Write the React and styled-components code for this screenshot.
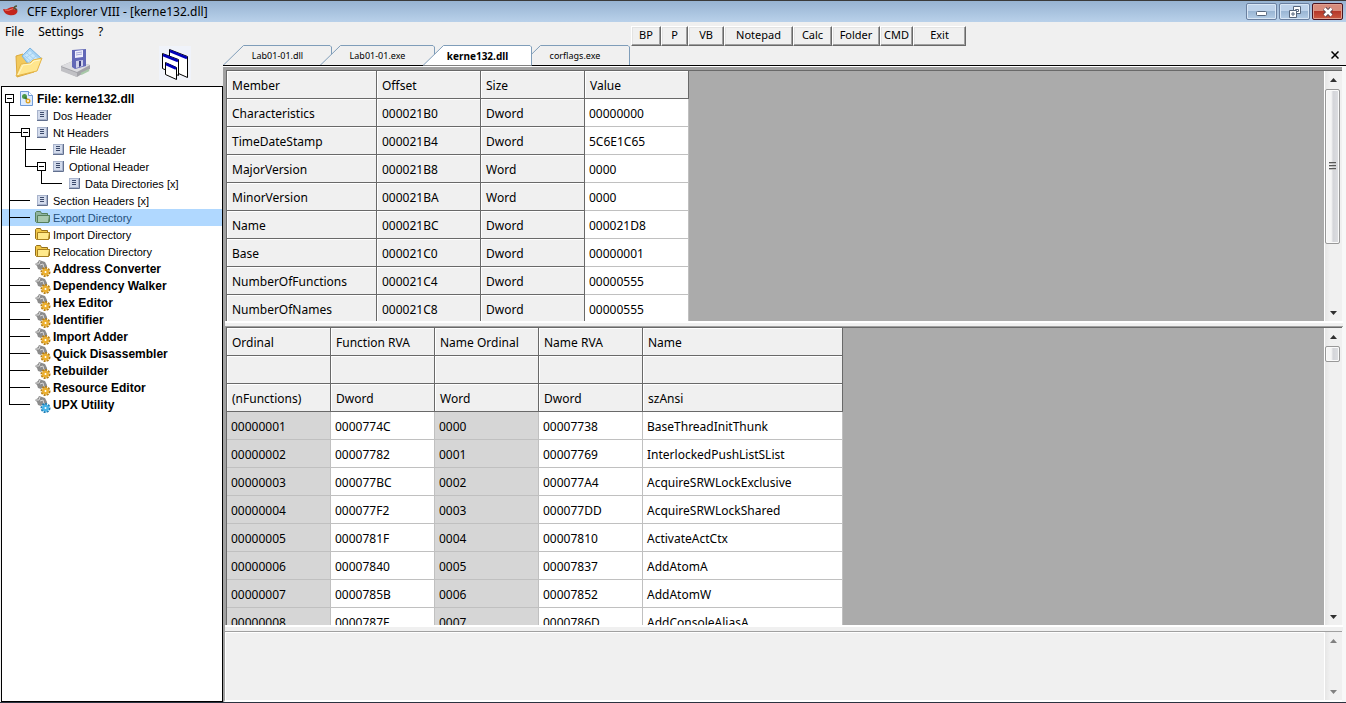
import { useState } from "react";
import styled, { createGlobalStyle } from "styled-components";

const UI_FONT = `"Noto Sans", "Open Sans", sans-serif`;
const TREE_FONT = `"Liberation Sans", Arial, sans-serif`;

const FACE = "#f0f0f0";
const SHADOW = "#a0a0a0";
const DARK = "#696969";
const WORKSPACE = "#ababab";

const GlobalStyle = createGlobalStyle`
    * {
        box-sizing: border-box;
    }

    body {
        margin: 0;
        background: ${FACE};
        color: #000000;
        font-family: ${UI_FONT};
        font-size: 12px;
        overflow: hidden;
    }

    button {
        margin: 0;
        padding: 0;
        border: 0;
        background: none;
        color: inherit;
        font: inherit;
    }

    svg {
        display: block;
        flex: none;
    }
`;

const Window = styled.div`
    display: flex;
    flex-direction: column;
    height: 100vh;
    border-bottom: 1px solid #2b3340;
    background: ${FACE};
`;

const TitleBar = styled.header`
    display: flex;
    align-items: center;
    height: 22px;
    padding: 0 3px;
    border-top: 1px solid #3a3a3a;
    background: linear-gradient(#97b3d2, #b9d1ea);

    h1 {
        flex: 1;
        margin: 0 0 0 8px;
        font-size: 12px;
        font-weight: normal;
        line-height: 20px;
    }
`;

const Caption = styled.button`
    display: flex;
    align-items: center;
    justify-content: center;
    width: 31px;
    height: 17px;
    margin-left: 2px;
    border: 1px solid ${({ $close }) => ($close ? "#4a1420" : "#6a80a0")};
    border-radius: 2px;
    box-shadow: inset 0 0 0 1px ${({ $close }) => ($close ? "#e0a090" : "#d8e6f5")};
    background: ${({ $close }) =>
        $close
            ? "linear-gradient(#d88c7c 0 45%, #b5382a 50%, #cc5a42)"
            : "linear-gradient(#bdd2ea 0 45%, #9ab6d4 50%, #b4cde6)"};
`;

const Body = styled.div`
    display: grid;
    grid-template-columns: 223px minmax(0, 1fr);
    flex: 1;
    min-height: 0;
`;

const Sidebar = styled.aside`
    display: flex;
    flex-direction: column;
    min-height: 0;
    padding-left: 1px;
`;

const MenuBar = styled.nav`
    display: flex;
    gap: 14px;
    height: 20px;
    padding-left: 4px;

    button {
        line-height: 20px;
    }
`;

const ToolBar = styled.div`
    display: flex;
    gap: 16px;
    height: 44px;
    padding: 4px 12px;

    button {
        width: 32px;
        height: 34px;
    }

    button:last-child {
        margin-left: 50px;
        background: #f0f3fa;
    }
`;

const Tree = styled.ul`
    flex: 1;
    min-height: 0;
    margin: 0;
    padding: 3px 0 0;
    border: 1px solid #000000;
    background: #ffffff;
    list-style: none;
    overflow: hidden;
    font-family: ${TREE_FONT};
`;

const TreeRow = styled.button`
    display: flex;
    align-items: center;
    width: 100%;
    height: 17px;
    background: ${({ $selected }) => ($selected ? "#b0d8ff" : "transparent")};
    color: ${({ $selected }) => ($selected ? "#24507c" : "#000000")};
    font-size: ${({ $bold }) => ($bold ? "12px" : "11px")};
    font-weight: ${({ $bold }) => ($bold ? "bold" : "normal")};
    line-height: 15px;
    white-space: nowrap;

    span {
        margin-left: 2px;
        padding-top: 2px;
    }
`;

const Main = styled.main`
    display: flex;
    flex-direction: column;
    min-width: 0;
    min-height: 0;
`;

const LaunchBar = styled.div`
    display: flex;
    height: 24px;
    padding: 4px 0 0 408px;
`;

const LaunchButton = styled.button`
    width: ${({ $width }) => $width}px;
    height: 20px;
    padding-bottom: 2px;
    border: 1px solid;
    border-color: #ffffff ${DARK} ${DARK} #ffffff;
    box-shadow: inset -1px -1px 0 ${SHADOW}, inset 1px 1px 0 #e3e3e3;
    background: ${FACE};
    font-size: 11px;
    line-height: 16px;
`;

const TabBar = styled.div`
    display: flex;
    height: 21px;
    margin-top: -1px;
    border-bottom: 1px solid #000000;
`;

const TabButton = styled.button`
    position: relative;
    z-index: ${({ $active }) => ($active ? 2 : "auto")};
    width: ${({ $width }) => $width}px;
    height: 21px;
    font-size: ${({ $active }) => ($active ? "10px" : "9px")};
    font-weight: ${({ $active }) => ($active ? "bold" : "normal")};

    & + & {
        margin-left: -12px;
    }

    svg {
        position: absolute;
        inset: 0;
    }

    span {
        position: relative;
    }
`;

const CloseDocument = styled.button`
    display: flex;
    align-items: center;
    margin: 0 7px 0 auto;
`;

const Workspace = styled.div`
    display: grid;
    grid-template-rows: 251fr 6px 298fr 6px 71fr;
    flex: 1;
    min-height: 0;
    padding: 3px 0 0 3px;
    border-top: 1px solid #ffffff;
    border-right: 4px solid #f8f8f8;
    background: ${SHADOW};
`;

const Pane = styled.section`
    display: flex;
    min-width: 0;
    min-height: 0;
    border-top: 1px solid ${DARK};
    border-left: 1px solid ${DARK};
    background: ${WORKSPACE};
    overflow: hidden;
`;

const PaneContent = styled.div`
    flex: 1;
    min-width: 0;
    overflow: hidden;
`;

const LogPane = styled(Pane)`
    margin-left: -2px;
    border-color: ${SHADOW};
    border-bottom: 2px solid #ffffff;
    background: ${FACE};
    box-shadow: inset 1px 1px 0 #ffffff;
`;

const LogText = styled.textarea`
    flex: 1;
    min-width: 0;
    border: 0;
    outline: 0;
    background: transparent;
    resize: none;
    font: inherit;
`;

const Splitter = styled.div`
    margin: 0 -1px;
    border-top: 2px solid #ffffff;
    border-bottom: 1px solid ${({ $soft }) => ($soft ? FACE : SHADOW)};
    background: ${FACE};
`;

const Grid = styled.table`
    table-layout: fixed;
    width: ${({ $width }) => $width}px;
    border-collapse: separate;
    border-spacing: 0;
`;

const HeadCell = styled.th`
    height: 28px;
    padding: 3px 0 0 5px;
    border-right: 1px solid ${DARK};
    border-bottom: 1px solid ${DARK};
    box-shadow: inset 1px 1px 0 #ffffff;
    background: ${FACE};
    font-weight: normal;
    line-height: 20px;
    text-align: left;
    white-space: nowrap;
`;

const DataCell = styled.td`
    height: 28px;
    padding: 3px 0 0 4px;
    border-right: 1px solid #c0c0c0;
    border-bottom: 1px solid #c0c0c0;
    background: ${({ $shaded }) => ($shaded ? "#d6d6d6" : "#ffffff")};
    line-height: 20px;
    white-space: nowrap;
`;

const ScrollColumn = styled.div`
    display: flex;
    flex-direction: column;
    width: 18px;
    border: solid #ffffff;
    border-width: 0 0 0 1px;
    background: linear-gradient(90deg, #e6e6e6, #f0f0f0 30%, #f0f0f0);

    button {
        display: flex;
        align-items: center;
        justify-content: center;
        height: 17px;
    }
`;

const Track = styled.div`
    flex: 1;
    padding: 1px 2px 0 0;
`;

const Thumb = styled.div`
    display: flex;
    align-items: center;
    justify-content: center;
    height: ${({ $height }) => $height};
    border: 1px solid #989898;
    border-radius: 2px;
    box-shadow: inset 0 0 0 1px #fafafa;
    background: linear-gradient(90deg, #f5f5f5 0 40%, #d4d5d9 55%, #dedfe2);
`;

const ChiliIcon = () => (
    <svg width="16" height="14" viewBox="0 0 16 14">
        <path d="M0 4q3 1 6-1q4-2 7 0q3 3 0 6q-3 2-7 1q-5-1-6-6z" fill="#c3251d" />
        <path d="M2 5q4 1 7-1q2-1 3 0" fill="none" stroke="#f08070" />
        <path d="M11 4q0-3 3-3M11 3l3 2" fill="none" stroke="#4c5838" strokeWidth="1.5" />
    </svg>
);

const OpenIcon = () => (
    <svg width="32" height="34" viewBox="0 0 32 34">
        <path d="M3 10l7-2 3 3 9 6-1 9-17 5z" fill="#f2c95c" stroke="#dca93c" />
        <path d="M17 2l12 11-10 10-10-13z" fill="#a8d4f4" stroke="#79b4e2" />
        <path d="M17 5l8 8-7 6-7-9z" fill="#c8e7fb" />
        <path d="M14 7l10 9M12 10l9 8M20 7l-7 5M23 10l-7 6" stroke="#a4d0f0" />
        <path d="M3 30l5-12 9-1 3-3 9-2-5 13z" fill="#ffe68e" stroke="#e5b548" />
        <path d="M5 29l5-10 8-1 3-3 6-1" fill="none" stroke="#fff7c8" />
    </svg>
);

const SaveIcon = () => (
    <svg width="32" height="34" viewBox="0 0 32 34">
        <path d="M0 20l12-5 17 4v4l-13 8-16-7z" fill="#a3a3a8" />
        <path d="M0 20l12-5 17 4-13 7z" fill="#dddde0" />
        <path d="M0 21l16 6v4l-16-6z" fill="#c1c1c5" />
        <path d="M20 28l8-4" stroke="#a8c8a8" strokeWidth="2" />
        <path d="M11 4l14-1v17l-11 3-3-2z" fill="#6268b7" />
        <path d="M14 5l8-1v7l-8 1z" fill="#f0f0fc" />
        <path d="M15 7l6-1M15 9l6-1" stroke="#a4a8d8" />
        <path d="M15 15l7-1v6l-7 2z" fill="#d0d2ea" />
        <path d="M18 15l2 0v5l-2 1z" fill="#383c82" />
    </svg>
);

const CascadeIcon = () => (
    <svg width="32" height="34" viewBox="0 0 32 34">
        <g fill="#ffffff" stroke="#000000">
            <path d="M10.500 3.500l18 7v21l-18-8z" />
            <path d="M3.500 7.500l16 6v16l-16-7z" />
            <path d="M6.500 16.500l11 5v12l-11-5z" />
        </g>
        <g stroke="#0000b8" strokeWidth="2.500">
            <path d="M11 5l17 7M4 9l15 6M7 18l10 4.500" />
        </g>
    </svg>
);

const ModuleIcon = () => (
    <svg width="17" height="17" viewBox="0 0 17 17">
        <path d="M2.500 1.500h8l4 4v10h-12z" fill="#dcebff" stroke="#6f9ad6" />
        <path d="M10.500 1.500v4h4" fill="#ffffff" stroke="#6f9ad6" />
        <circle cx="6.500" cy="6.500" r="2.500" fill="#4c9a48" />
        <path d="M7 7l3 4" stroke="#387838" strokeWidth="2" />
        <circle cx="10" cy="11" r="2.500" fill="#e0a428" />
        <circle cx="10" cy="11" r="1" fill="#ffffff" />
    </svg>
);

const HeaderIcon = () => (
    <svg width="17" height="17" viewBox="0 0 17 17">
        <rect x="3.500" y="3.500" width="9" height="9" fill="#d3dbec" stroke="#a9b4cc" />
        <path d="M3 13.500h10.500V3" fill="none" stroke="#62708f" />
        <path d="M6 5.500h4M6 7.500h4M6 9.500h4" stroke="#3d4b6c" />
    </svg>
);

const FolderIcon = ({ selected }) => (
    <svg width="17" height="17" viewBox="0 0 17 17">
        <path
            d="M1.500 12.500v-9l1-1h4l1 2h6v2h2v6l-1 1h-12z"
            fill={selected ? "#8fb3a0" : "#f2c848"}
            stroke={selected ? "#56805c" : "#94701c"}
        />
        <path
            d="M3.500 6.500h12l-1 7h-11z"
            fill={selected ? "#a8c8ae" : "#ffe98a"}
            stroke={selected ? "#56805c" : "#a88020"}
        />
    </svg>
);

const GearsIcon = ({ color = "#ecb030", edge = "#b47c14" }) => (
    <svg width="17" height="17" viewBox="0 0 17 17">
        <path d="M1 4l3-2 1-2 3 1 3 1 2 4v5l-3 1-1-4-2 2-3-1-1-3z" fill="#8c8c8c" />
        <path d="M2 4l3 0 1-3M6 5l3-1 1 4" fill="none" stroke="#d8d8d8" />
        <circle cx="11.500" cy="12" r="4" fill="none" stroke={edge} strokeWidth="2" strokeDasharray="2 1" />
        <circle cx="11.500" cy="12" r="3.500" fill={color} />
        <circle cx="11.500" cy="12" r="1" fill="#ffffff" />
    </svg>
);

const TREE_ICONS = {
    module: () => <ModuleIcon />,
    header: () => <HeaderIcon />,
    folder: (selected) => <FolderIcon selected={selected} />,
    gears: () => <GearsIcon />,
    upx: () => <GearsIcon color="#48b4e8" edge="#1c7cb4" />,
};

// one 16px wide cell of connector lines, the trunk runs at x = 7
const GUIDES = {
    blank: "",
    bar: "M7.500 0v17",
    tee: "M7.500 0v17M7.500 8.500h8.500",
    elbow: "M7.500 0v9M7.500 8.500h8.500",
    dash: "M0 8.500h12",
    root: "M7.500 13v4",
    box: "M0 8.500h4M7.500 13v4",
};

const Guide = ({ kind }) => (
    <svg width="16" height="17" viewBox="0 0 16 17" shapeRendering="crispEdges" stroke="#000000" fill="none">
        <path d={GUIDES[kind]} />
        {(kind === "root" || kind === "box") && (
            <>
                <rect x="3.500" y="4.500" width="8" height="8" fill="#ffffff" />
                <path d="M5 8.500h5" />
            </>
        )}
    </svg>
);

const TREE = [
    { label: "File: kerne132.dll", icon: "module", guides: ["root"], bold: true },
    { label: "Dos Header", icon: "header", guides: ["tee", "dash"] },
    { label: "Nt Headers", icon: "header", guides: ["tee", "box"] },
    { label: "File Header", icon: "header", guides: ["bar", "tee", "dash"] },
    { label: "Optional Header", icon: "header", guides: ["bar", "elbow", "box"] },
    { label: "Data Directories [x]", icon: "header", guides: ["bar", "blank", "elbow", "dash"] },
    { label: "Section Headers [x]", icon: "header", guides: ["tee", "dash"] },
    { label: "Export Directory", icon: "folder", guides: ["tee", "dash"] },
    { label: "Import Directory", icon: "folder", guides: ["tee", "dash"] },
    { label: "Relocation Directory", icon: "folder", guides: ["tee", "dash"] },
    { label: "Address Converter", icon: "gears", guides: ["tee", "dash"], bold: true },
    { label: "Dependency Walker", icon: "gears", guides: ["tee", "dash"], bold: true },
    { label: "Hex Editor", icon: "gears", guides: ["tee", "dash"], bold: true },
    { label: "Identifier", icon: "gears", guides: ["tee", "dash"], bold: true },
    { label: "Import Adder", icon: "gears", guides: ["tee", "dash"], bold: true },
    { label: "Quick Disassembler", icon: "gears", guides: ["tee", "dash"], bold: true },
    { label: "Rebuilder", icon: "gears", guides: ["tee", "dash"], bold: true },
    { label: "Resource Editor", icon: "gears", guides: ["tee", "dash"], bold: true },
    { label: "UPX Utility", icon: "upx", guides: ["elbow", "dash"], bold: true },
];

const LAUNCHERS = [
    ["BP", 30],
    ["P", 27],
    ["VB", 36],
    ["Notepad", 69],
    ["Calc", 39],
    ["Folder", 48],
    ["CMD", 33],
    ["Exit", 53],
];

const TABS = [
    ["Lab01-01.dll", 109],
    ["Lab01-01.exe", 115],
    ["kerne132.dll", 109],
    ["corflags.exe", 110],
];

const MEMBERS = [
    ["Characteristics", "000021B0", "Dword", "00000000"],
    ["TimeDateStamp", "000021B4", "Dword", "5C6E1C65"],
    ["MajorVersion", "000021B8", "Word", "0000"],
    ["MinorVersion", "000021BA", "Word", "0000"],
    ["Name", "000021BC", "Dword", "000021D8"],
    ["Base", "000021C0", "Dword", "00000001"],
    ["NumberOfFunctions", "000021C4", "Dword", "00000555"],
    ["NumberOfNames", "000021C8", "Dword", "00000555"],
];

const EXPORT_HEAD = [
    ["Ordinal", "Function RVA", "Name Ordinal", "Name RVA", "Name"],
    ["", "", "", "", ""],
    ["(nFunctions)", "Dword", "Word", "Dword", "szAnsi"],
];

const EXPORTS = [
    ["00000001", "0000774C", "0000", "00007738", "BaseThreadInitThunk"],
    ["00000002", "00007782", "0001", "00007769", "InterlockedPushListSList"],
    ["00000003", "000077BC", "0002", "000077A4", "AcquireSRWLockExclusive"],
    ["00000004", "000077F2", "0003", "000077DD", "AcquireSRWLockShared"],
    ["00000005", "0000781F", "0004", "00007810", "ActivateActCtx"],
    ["00000006", "00007840", "0005", "00007837", "AddAtomA"],
    ["00000007", "0000785B", "0006", "00007852", "AddAtomW"],
    ["00000008", "0000787F", "0007", "0000786D", "AddConsoleAliasA"],
];

const Tab = ({ label, width, active, onClick }) => (
    <TabButton type="button" role="tab" aria-selected={active} $width={width} $active={active} onClick={onClick}>
        <svg width={width} height="21">
            <path
                d={`M0 20.500L20.500.5H${width - 2}l1.500 1.500V20.500z`}
                fill={active ? "#ffffff" : FACE}
            />
            <path
                d={`M0 20.500L20.500.5H${width - 2}l1.500 1.500V20.500`}
                fill="none"
                stroke="#7f9db9"
            />
            {!active && <path d={`M0 20.500H${width}`} stroke="#000000" />}
        </svg>
        <span>{label}</span>
    </TabButton>
);

const ScrollBar = ({ thumb, grip, disabled }) => {
    const arrow = disabled ? "#808080" : "#303030";
    return (
        <ScrollColumn>
            <button type="button" aria-label="Scroll up" disabled={disabled}>
                <svg width="7" height="4"><path d="M0 4l3.500-4L7 4z" fill={arrow} /></svg>
            </button>
            <Track>
                {thumb && (
                    <Thumb $height={thumb}>
                        {grip && (
                            <svg width="7" height="8" shapeRendering="crispEdges">
                                <path d="M0 .5h7M0 3.500h7M0 6.500h7" stroke="#585858" />
                                <path d="M0 1.500h7M0 4.500h7M0 7.500h7" stroke="#c0c0c0" />
                            </svg>
                        )}
                    </Thumb>
                )}
            </Track>
            <button type="button" aria-label="Scroll down" disabled={disabled}>
                <svg width="7" height="4"><path d="M0 0l3.500 4L7 0z" fill={arrow} /></svg>
            </button>
        </ScrollColumn>
    );
};

const MemberTable = () => (
    <Grid $width={462}>
        <colgroup>
            <col width="150" />
            <col width="104" />
            <col width="104" />
            <col width="104" />
        </colgroup>
        <thead>
            <tr>
                {["Member", "Offset", "Size", "Value"].map((name) => (
                    <HeadCell key={name} scope="col">{name}</HeadCell>
                ))}
            </tr>
        </thead>
        <tbody>
            {MEMBERS.map(([member, offset, size, value]) => (
                <tr key={member}>
                    <HeadCell scope="row">{member}</HeadCell>
                    <HeadCell as="td">{offset}</HeadCell>
                    <HeadCell as="td">{size}</HeadCell>
                    <DataCell>{value}</DataCell>
                </tr>
            ))}
        </tbody>
    </Grid>
);

const ExportTable = () => (
    <Grid $width={616}>
        <colgroup>
            <col width="104" />
            <col width="104" />
            <col width="104" />
            <col width="104" />
            <col width="200" />
        </colgroup>
        <thead>
            {EXPORT_HEAD.map((row, i) => (
                <tr key={i}>
                    {row.map((text, j) => <HeadCell key={j}>{text}</HeadCell>)}
                </tr>
            ))}
        </thead>
        <tbody>
            {EXPORTS.map((row) => (
                <tr key={row[0]}>
                    {row.map((text, j) => (
                        <DataCell key={j} $shaded={j === 0 || j === 2}>{text}</DataCell>
                    ))}
                </tr>
            ))}
        </tbody>
    </Grid>
);

const App = () => {
    const [selected, setSelected] = useState("Export Directory");
    const [tab, setTab] = useState("kerne132.dll");

    return (
        <>
            <GlobalStyle />
            <Window>
                <TitleBar>
                    <ChiliIcon />
                    <h1>CFF Explorer VIII - [kerne132.dll]</h1>
                    <Caption type="button" aria-label="Minimize">
                        <svg width="12" height="12">
                            <rect x=".5" y="5.500" width="10" height="4" rx="1" fill="#ffffff" stroke="#56667c" />
                        </svg>
                    </Caption>
                    <Caption type="button" aria-label="Restore">
                        <svg width="12" height="12" fill="#ffffff" stroke="#56667c">
                            <path d="M4.500.5h7v7h-7zM6.500 3.500h3v2h-3z" />
                            <path d="M.5 4.500h7v7h-7zM3 7h2v2h-2z" />
                        </svg>
                    </Caption>
                    <Caption type="button" aria-label="Close" $close>
                        <svg width="12" height="10">
                            <path d="M2.500 1.500l7 7M9.500 1.500l-7 7" stroke="#5c4550" strokeWidth="4.500" />
                            <path d="M2.500 1.500l7 7M9.500 1.500l-7 7" stroke="#ffffff" strokeWidth="2.500" />
                        </svg>
                    </Caption>
                </TitleBar>

                <Body>
                    <Sidebar>
                        <MenuBar>
                            <button type="button">File</button>
                            <button type="button">Settings</button>
                            <button type="button">?</button>
                        </MenuBar>
                        <ToolBar>
                            <button type="button" aria-label="Open"><OpenIcon /></button>
                            <button type="button" aria-label="Save"><SaveIcon /></button>
                            <button type="button" aria-label="Windows"><CascadeIcon /></button>
                        </ToolBar>
                        <Tree>
                            {TREE.map(({ label, icon, guides, bold }) => (
                                <li key={label}>
                                    <TreeRow
                                        type="button"
                                        $bold={bold}
                                        $selected={label === selected}
                                        onClick={() => setSelected(label)}
                                    >
                                        {guides.map((kind, i) => <Guide key={i} kind={kind} />)}
                                        {TREE_ICONS[icon](label === selected)}
                                        <span>{label}</span>
                                    </TreeRow>
                                </li>
                            ))}
                        </Tree>
                    </Sidebar>

                    <Main>
                        <LaunchBar>
                            {LAUNCHERS.map(([label, width]) => (
                                <LaunchButton key={label} type="button" $width={width}>{label}</LaunchButton>
                            ))}
                        </LaunchBar>
                        <TabBar role="tablist">
                            {TABS.map(([label, width]) => (
                                <Tab
                                    key={label}
                                    label={label}
                                    width={width}
                                    active={label === tab}
                                    onClick={() => setTab(label)}
                                />
                            ))}
                            <CloseDocument type="button" aria-label="Close document">
                                <svg width="8" height="8">
                                    <path d="M.5.5l7 7M7.500.5l-7 7" stroke="#000000" strokeWidth="1.500" />
                                </svg>
                            </CloseDocument>
                        </TabBar>

                        <Workspace>
                            <Pane>
                                <PaneContent><MemberTable /></PaneContent>
                                <ScrollBar thumb="72%" grip />
                            </Pane>
                            <Splitter />
                            <Pane>
                                <PaneContent><ExportTable /></PaneContent>
                                <ScrollBar thumb="16px" />
                            </Pane>
                            <Splitter $soft />
                            <LogPane>
                                <LogText aria-label="Output" readOnly />
                                <ScrollBar disabled />
                            </LogPane>
                        </Workspace>
                    </Main>
                </Body>
            </Window>
        </>
    );
};

export default App;
